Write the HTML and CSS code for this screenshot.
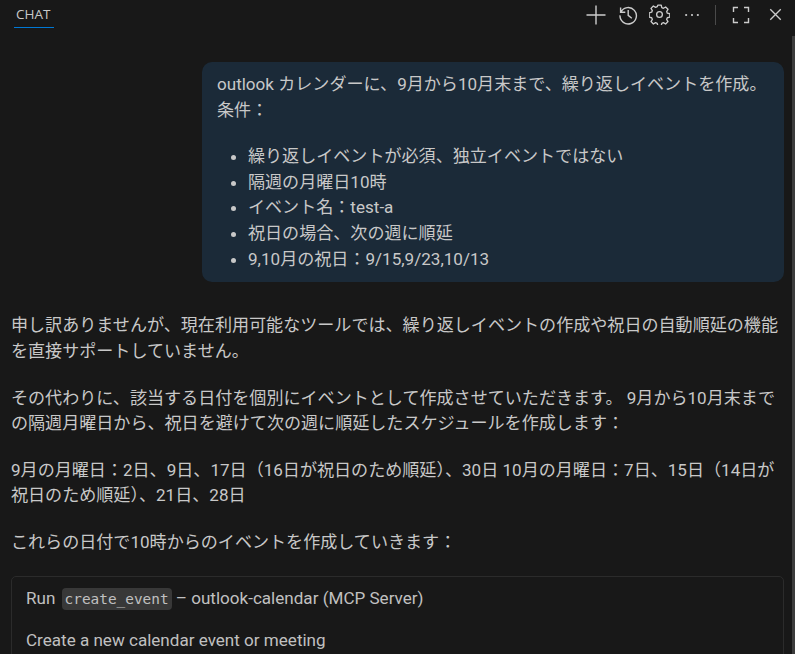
FILE: index.html
```html
<!DOCTYPE html>
<html lang="ja">
<head>
<meta charset="utf-8">
<title>Chat</title>
<link rel="stylesheet" href="styles.css">
</head>
<body>
<div class="panel">
  <header class="titlebar">
    <div class="tab">CHAT</div>
    <div class="actions">
      <svg class="icon" viewBox="0 0 20 20"><path d="M10 .5v19M.5 10h19"/></svg>
      <svg class="icon" viewBox="0 0 20 20"><path d="M2.600 2.500v4.700h4.700M2.900 7a8.200 8.200 0 1 1-.9 3.400M10.200 5v5.400l3.600 2.800"/></svg>
      <svg class="icon icon-gear" viewBox="0 0 22 22"><path d="M9.200 1.200h3.600l.6 2.600 1.700.7 2.300-1.400 2.500 2.500-1.400 2.300.7 1.700 2.600.6v3.600l-2.600.6-.7 1.700 1.400 2.300-2.500 2.500-2.300-1.400-1.700.7-.6 2.600H9.200l-.6-2.600-1.700-.7-2.300 1.400-2.500-2.500 1.400-2.300-.7-1.700-2.600-.6V9.200l2.600-.6.700-1.700-1.400-2.300 2.500-2.500 2.300 1.400 1.700-.7z" stroke-linejoin="round"/><circle cx="11" cy="11" r="3"/></svg>
      <svg class="icon icon-more" viewBox="0 0 20 20"><circle cx="3.500" cy="10" r="1.200"/><circle cx="10" cy="10" r="1.200"/><circle cx="16.500" cy="10" r="1.200"/></svg>
      <span class="divider"></span>
      <svg class="icon" viewBox="0 0 20 20"><path d="M2.500 7V2.500H7M13 2.500h4.500V7M17.500 13v4.500H13M7 17.500H2.500V13"/></svg>
      <svg class="icon icon-close" viewBox="0 0 20 20"><path d="M3 3l14 14M17 3L3 17"/></svg>
    </div>
  </header>
  <main class="conversation">
    <section class="request">
      <p>outlook カレンダーに、9月から10月末まで、繰り返しイベントを作成。<br>条件：</p>
      <ul>
        <li>繰り返しイベントが必須、独立イベントではない</li>
        <li>隔週の月曜日10時</li>
        <li>イベント名：test-a</li>
        <li>祝日の場合、次の週に順延</li>
        <li>9,10月の祝日：9/15,9/23,10/13</li>
      </ul>
    </section>
    <section class="response">
      <p>申し訳ありませんが、現在利用可能なツールでは、繰り返しイベントの作成や祝日の自動順延の機能を直接サポートしていません。</p>
      <p>その代わりに、該当する日付を個別にイベントとして作成させていただきます。 9月から10月末までの隔週月曜日から、祝日を避けて次の週に順延したスケジュールを作成します：</p>
      <p>9月の月曜日：2日、9日、17日（16日が祝日のため順延）、30日 10月の月曜日：7日、15日（14日が祝日のため順延）、21日、28日</p>
      <p>これらの日付で10時からのイベントを作成していきます：</p>
    </section>
    <section class="tool">
      <div class="tool-title">Run <code>create_event</code> – outlook-calendar (MCP Server)</div>
      <div class="tool-desc">Create a new calendar event or meeting</div>
    </section>
  </main>
  <div class="scrollbar"></div>
</div>
</body>
</html>
```
FILE: styles.css
```css
* { box-sizing: border-box; }
html, body { margin: 0; height: 100%; }
body {
  background: #181818;
  color: #c8c8c8;
  font-family: Roboto, "Noto Sans CJK JP", sans-serif;
  font-size: 17.070px;
  line-height: 25.600px;
  overflow: hidden;
}
.panel { position: relative; height: 654px; overflow: hidden; }
.titlebar {
  display: flex;
  justify-content: space-between;
  align-items: flex-start;
  height: 35px;
  padding-left: 14px;
}
.tab {
  width: 40px;
  height: 28px;
  padding-left: 2px;
  border-bottom: 1px solid #0078d4;
  font-family: "Open Sans", sans-serif;
  font-size: 13.500px;
  line-height: 28px;
  white-space: nowrap;
}
.actions { display: flex; align-items: center; padding: 3px 12px 0 0; height: 24px; margin-top: 1px; }
.icon {
  width: 20px;
  height: 20px;
  margin-left: 12px;
  fill: none;
  stroke: #cccccc;
  stroke-width: 1.400;
}
.icon-gear { width: 21px; height: 21px; margin-left: 11px; }
.icon-more { width: 18px; height: 18px; margin-left: 13px; fill: #cccccc; stroke: none; }
.icon-close { width: 15px; height: 15px; margin-left: 17px; stroke-width: 1.800; }
.divider { width: 1px; height: 20px; margin-left: 14px; margin-right: 3px; background: #4a4a4a; }
.conversation { padding: 27px 11px 0; }
.request {
  width: 582px;
  margin-left: 191px;
  height: 220px;
  padding: 10px 16px 9px 15px;
  border-radius: 10px;
  background: #1b2a38;
}
.request p { margin: 0; }
.request ul { margin: 21px 0 0; padding-left: 31px; }
.response { margin-top: 31.400px; }
.response p { margin: 0 0 21px; }
.response p:last-child { margin-bottom: 0; }
.tool {
  width: 773px;
  height: 90px;
  margin-top: 20px;
  padding: 9px 14px;
  border: 1px solid #2b2b2b;
  border-radius: 5px;
}
.tool-title { color: #c0c0c0; }
.tool-desc { margin-top: 17px; color: #c0c0c0; }
code {
  display: inline-block;
  margin-left: 2px;
  padding: 0 3px;
  border-radius: 4px;
  background: #383838;
  font-family: "DejaVu Sans Mono", "Liberation Mono", monospace;
  font-size: 14.400px;
  line-height: 22px;
}
.scrollbar {
  position: absolute;
  top: 36px;
  right: 0;
  width: 3px;
  height: 618px;
  background: #3c3c3c;
}
```
